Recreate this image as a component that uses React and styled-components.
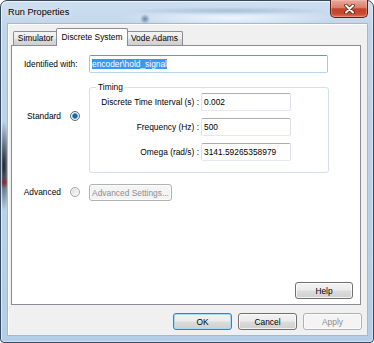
import React from 'react';
import styled, { createGlobalStyle } from 'styled-components';

const GlobalStyle = createGlobalStyle`
  html, body {
    margin: 0;
    padding: 0;
    background: #ffffff;
  }
  body {
    font-family: "Liberation Sans", Arial, sans-serif;
    font-size: 8.4px;
    color: #000;
  }
  * {
    box-sizing: border-box;
  }
`;

const Window = styled.div`
  width: 374px;
  height: 343px;
  display: flex;
  flex-direction: column;
  padding: 0 5px 6px 6px;
  border: 1px solid #34485e;
  border-radius: 7px 7px 4px 4px;
  background:
    radial-gradient(ellipse 5px 6px at 3px 181px, rgba(150, 30, 30, 0.9), rgba(150, 30, 30, 0)),
    radial-gradient(ellipse 6px 45px at 3px 165px, rgba(12, 12, 16, 0.9), rgba(12, 12, 16, 0)),
    linear-gradient(180deg, #cddff0 0px, #c0d5eb 30px, #b4cde8 100%);
  box-shadow: inset 1px 1px 0 rgba(255, 255, 255, 0.6), inset -1px -1px 0 rgba(255, 255, 255, 0.4);
`;

const TitleBar = styled.div`
  height: 22px;
  display: flex;
  align-items: flex-start;
  justify-content: space-between;
  background:
    radial-gradient(circle 5px at 138px 18px, rgba(40, 70, 120, 0.6), rgba(40, 70, 120, 0)),
    radial-gradient(ellipse 100px 4px at 222px 10px, rgba(120, 150, 185, 0.45), rgba(120, 150, 185, 0)),
    radial-gradient(ellipse 110px 9px at 222px 17px, rgba(240, 246, 252, 0.95), rgba(240, 246, 252, 0));
`;

const Title = styled.div`
  padding: 6px 0 0 1px;
  font-size: 9.2px;
  line-height: 11px;
  color: #000;
  text-shadow: 0 0 6px rgba(255, 255, 255, 0.9);
`;

const CloseButton = styled.div`
  width: 38px;
  height: 18px;
  margin-top: -1px;
  display: flex;
  align-items: center;
  justify-content: center;
  border: 1px solid #5c2018;
  border-top: none;
  border-radius: 0 0 5px 5px;
  background: linear-gradient(180deg, #e9ab9c 0%, #dc7e69 45%, #c4432a 52%, #c7492f 80%, #d9735a 100%);
  box-shadow: inset 0 0 0 1px rgba(255, 210, 200, 0.35);
`;

const Client = styled.div`
  flex: 1;
  display: flex;
  flex-direction: column;
  padding: 5px 5px 5px 3px;
  background: #f0f0f0;
  border: 1px solid #a6b8cc;
  box-shadow: inset 1px 1px 0 #fdfdfd;
`;

const TabControl = styled.div`
  flex: 1;
  display: flex;
  flex-direction: column;
  margin-right: 1px;
`;

const TabRow = styled.div`
  height: 16px;
  display: flex;
  align-items: flex-end;
  padding-left: 2px;
`;

const Tab = styled.div`
  position: relative;
  z-index: ${(p) => (p.$active ? 2 : 1)};
  width: ${(p) => p.$w}px;
  height: ${(p) => (p.$active ? 18 : 14)}px;
  margin: 0 ${(p) => (p.$active ? -2 : 0)}px ${(p) => (p.$active ? -1 : 0)}px;
  padding-top: ${(p) => (p.$active ? 2 : 0)}px;
  border: 1px solid #898c95;
  border-bottom: none;
  border-radius: 2px 2px 0 0;
  background: ${(p) =>
    p.$active ? '#ffffff' : 'linear-gradient(180deg, #f3f3f3 0%, #ebebeb 50%, #dddddd 51%, #cfcfcf 100%)'};
  line-height: ${(p) => (p.$active ? 12 : 13)}px;
  text-align: center;
  white-space: nowrap;
`;

const Panel = styled.div`
  flex: 1;
  display: flex;
  flex-direction: column;
  border: 1px solid #898c95;
  background: #ffffff;
  padding: 9px 0 5px 0;
`;

const Form = styled.div`
  display: grid;
  grid-template-columns: 53px 24px 240px;
  align-items: start;
`;

const IdLabel = styled.div`
  grid-column: 1 / 3;
  padding-left: 12px;
  line-height: 18px;
`;

const SideLabel = styled.div`
  justify-self: end;
  padding-right: 4px;
  line-height: 10px;
  margin-top: ${(p) => p.$top}px;
`;

const Radio = styled.div`
  width: 10px;
  height: 10px;
  margin: ${(p) => p.$top}px 0 0 5px;
  border-radius: 50%;
  border: 1px solid ${(p) => (p.$checked ? '#5e6670' : '#a3a6a9')};
  background: ${(p) =>
    p.$checked
      ? 'radial-gradient(circle at 50% 50%, #2f78b0 0px, #1d5c93 1.6px, #4aa2d8 2.6px, #ecf0f3 3.2px, #dfe3e7 100%)'
      : 'linear-gradient(135deg, #d6d8da 0%, #eef0f1 60%, #fafafa 100%)'};
  box-shadow: inset 0 0 0 1px rgba(255, 255, 255, 0.5);
`;

const TextBox = styled.div`
  width: ${(p) => (p.$w ? `${p.$w}px` : '100%')};
  height: 18px;
  padding: 0 2px;
  border: 1px solid;
  border-color: ${(p) =>
    p.$focused ? '#5a9bd1 #9ec8e8 #b5d6ef #9ec8e8' : '#abadb3 #dbdfe6 #e3e9ef #e2e3ea'};
  border-radius: 2px;
  background: #ffffff;
  line-height: 16px;
  white-space: nowrap;
  overflow: hidden;
`;

const Selection = styled.span`
  background: #3399ff;
  color: #ffffff;
`;

const GroupBox = styled.fieldset`
  grid-column: 3;
  margin: 9px 0 0 0;
  padding: 1px 0 11px 1px;
  min-width: 0;
  border: 1px solid #d5dfe5;
  border-radius: 3px;
  display: grid;
  grid-template-columns: 108px 90px;
  column-gap: 2px;
  row-gap: 7px;
`;

const Legend = styled.legend`
  margin-left: 5px;
  padding: 0 2px;
  line-height: 10px;
  font-size: 8.4px;
`;

const FieldLabel = styled.div`
  align-self: center;
  justify-self: end;
  white-space: nowrap;
`;

const Button = styled.div`
  width: ${(p) => p.$w}px;
  height: 17px;
  display: flex;
  align-items: center;
  justify-content: center;
  white-space: nowrap;
  border: 1px solid ${(p) => (p.$default ? '#3c7fb1' : p.$disabled ? '#adb2b5' : '#707070')};
  border-radius: 3px;
  background: ${(p) =>
    p.$disabled
      ? '#f4f4f4'
      : 'linear-gradient(180deg, #f2f2f2 0%, #ebebeb 49%, #dddddd 51%, #cfcfcf 100%)'};
  box-shadow: inset 0 0 0 1px ${(p) => (p.$default ? '#a6dcf6' : p.$disabled ? '#fcfcfc' : 'rgba(255, 255, 255, 0.75)')};
  color: ${(p) => (p.$disabled ? '#8d8d8d' : '#000')};
`;

const AdvancedButton = styled(Button)`
  grid-column: 3;
  margin-top: 11px;
`;

const HelpRow = styled.div`
  margin-top: auto;
  display: flex;
  justify-content: flex-end;
  padding-right: 7px;
`;

const ButtonRow = styled.div`
  display: flex;
  justify-content: flex-end;
  gap: 6px;
  margin-top: 8px;
`;

const timingFields = [
  { label: 'Discrete Time Interval (s) :', value: '0.002' },
  { label: 'Frequency (Hz) :', value: '500' },
  { label: 'Omega (rad/s) :', value: '3141.59265358979' },
];

export default function App() {
  return (
    <>
      <GlobalStyle />
      <Window>
        <TitleBar>
          <Title>Run Properties</Title>
          <CloseButton>
            <svg width="13" height="10" viewBox="0 0 13 10">
              <path d="M3 1.5 L10 8.5 M10 1.5 L3 8.5" stroke="#5a2318" strokeWidth="3.6" strokeLinecap="round" />
              <path d="M3 1.5 L10 8.5 M10 1.5 L3 8.5" stroke="#ffffff" strokeWidth="2" strokeLinecap="round" />
            </svg>
          </CloseButton>
        </TitleBar>
        <Client>
          <TabControl>
            <TabRow>
              <Tab $w={45}>Simulator</Tab>
              <Tab $w={72} $active>
                Discrete System
              </Tab>
              <Tab $w={57}>Vode Adams</Tab>
            </TabRow>
            <Panel>
              <Form>
                <IdLabel>Identified with:</IdLabel>
                <TextBox $focused $w={239}>
                  <Selection>encoder\hold_signal</Selection>
                </TextBox>

                <SideLabel $top={38}>Standard</SideLabel>
                <Radio $checked $top={38} />
                <GroupBox>
                  <Legend>Timing</Legend>
                  {timingFields.map((f) => (
                    <React.Fragment key={f.label}>
                      <FieldLabel>{f.label}</FieldLabel>
                      <TextBox>{f.value}</TextBox>
                    </React.Fragment>
                  ))}
                </GroupBox>

                <SideLabel $top={14}>Advanced</SideLabel>
                <Radio $top={14} />
                <AdvancedButton $w={83} $disabled>
                  Advanced Settings...
                </AdvancedButton>
              </Form>
              <HelpRow>
                <Button $w={58}>Help</Button>
              </HelpRow>
            </Panel>
          </TabControl>
          <ButtonRow>
            <Button $w={59} $default>
              OK
            </Button>
            <Button $w={59}>Cancel</Button>
            <Button $w={59} $disabled>
              Apply
            </Button>
          </ButtonRow>
        </Client>
      </Window>
    </>
  );
}
